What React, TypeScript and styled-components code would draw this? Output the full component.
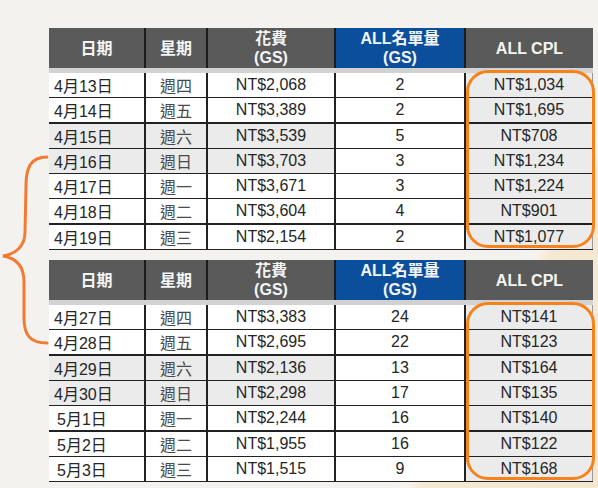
import styled, { createGlobalStyle } from 'styled-components'

type Row = {
  date: string
  day: string
  spend: string
  leads: string
  cpl: string
}

const weekOne: Row[] = [
  { date: '4月13日', day: '週四', spend: 'NT$2,068', leads: '2', cpl: 'NT$1,034' },
  { date: '4月14日', day: '週五', spend: 'NT$3,389', leads: '2', cpl: 'NT$1,695' },
  { date: '4月15日', day: '週六', spend: 'NT$3,539', leads: '5', cpl: 'NT$708' },
  { date: '4月16日', day: '週日', spend: 'NT$3,703', leads: '3', cpl: 'NT$1,234' },
  { date: '4月17日', day: '週一', spend: 'NT$3,671', leads: '3', cpl: 'NT$1,224' },
  { date: '4月18日', day: '週二', spend: 'NT$3,604', leads: '4', cpl: 'NT$901' },
  { date: '4月19日', day: '週三', spend: 'NT$2,154', leads: '2', cpl: 'NT$1,077' },
]

const weekTwo: Row[] = [
  { date: '4月27日', day: '週四', spend: 'NT$3,383', leads: '24', cpl: 'NT$141' },
  { date: '4月28日', day: '週五', spend: 'NT$2,695', leads: '22', cpl: 'NT$123' },
  { date: '4月29日', day: '週六', spend: 'NT$2,136', leads: '13', cpl: 'NT$164' },
  { date: '4月30日', day: '週日', spend: 'NT$2,298', leads: '17', cpl: 'NT$135' },
  { date: '5月1日', day: '週一', spend: 'NT$2,244', leads: '16', cpl: 'NT$140' },
  { date: '5月2日', day: '週二', spend: 'NT$1,955', leads: '16', cpl: 'NT$122' },
  { date: '5月3日', day: '週三', spend: 'NT$1,515', leads: '9', cpl: 'NT$168' },
]

const GlobalStyle = createGlobalStyle`
  html, body {
    margin: 0;
    padding: 0;
  }
  body {
    min-height: 488px;
    background: linear-gradient(119deg, #f3f2ee 0%, #f3f2ee 76.5%, #f8f4ec 78%, #f6e9d4 79.5%, #f5e6cf 100%);
    font-family: 'Liberation Sans', Arial, 'Noto Sans CJK TC', sans-serif;
  }
`

const Page = styled.div`
  position: relative;
  display: flex;
  flex-direction: column;
  gap: 10px;
  padding: 28px 0 0 49px;
`

const Brace = styled.svg`
  position: absolute;
  left: 0;
  top: 0;
  pointer-events: none;
`

const Sheet = styled.div`
  position: relative;
  width: 544px;
`

const columns = '97px 62px 128px 130px 127px'

const HeaderRow = styled.div`
  display: grid;
  grid-template-columns: ${columns};
  height: 40px;
  background: #5a5a5a;
`

const HeadCell = styled.div<{ $blue?: boolean }>`
  display: flex;
  flex-direction: column;
  align-items: center;
  justify-content: center;
  background: ${(p) => (p.$blue ? '#0b4f9c' : 'transparent')};
  border-right: 2px solid #1c1c1c;
  color: #f4f4f4;
  font-weight: 700;
  font-size: 16px;
  line-height: 19px;

  &:last-child {
    border-right: none;
  }
`

const Strip = styled.div`
  height: 5px;
  background: #d2d2d2;
`

const DataRow = styled.div`
  display: grid;
  grid-template-columns: ${columns};
  height: 25.3px;
  box-sizing: border-box;
  border-bottom: 2px solid #222;
`

const Cell = styled.div<{ $left?: boolean; $shade?: boolean; $indent?: boolean }>`
  display: flex;
  align-items: center;
  justify-content: ${(p) => (p.$left ? 'flex-start' : 'center')};
  padding-left: ${(p) => (p.$left ? (p.$indent ? '8px' : '5px') : '0')};
  background: ${(p) => (p.$shade ? '#ebebeb' : '#ffffff')};
  border-right: 2px solid #222;
  color: #262626;
  font-size: 16px;

  &:last-child {
    border-right: 1px solid #9a9a9a;
  }
`

const DayText = styled.span`
  color: #4a4a4a;
`

const Highlight = styled.div`
  position: absolute;
  left: 417px;
  right: -2px;
  top: 42px;
  bottom: 2px;
  border: 3.5px solid #f7821a;
  border-radius: 22px;
  pointer-events: none;
`

const Table = ({ rows }: { rows: Row[] }) => (
  <Sheet>
    <HeaderRow>
      <HeadCell>日期</HeadCell>
      <HeadCell>星期</HeadCell>
      <HeadCell>
        <span>花費</span>
        <span>(GS)</span>
      </HeadCell>
      <HeadCell $blue>
        <span>ALL名單量</span>
        <span>(GS)</span>
      </HeadCell>
      <HeadCell>ALL CPL</HeadCell>
    </HeaderRow>
    <Strip />
    {rows.map((r) => {
      const weekend = r.day === '週六' || r.day === '週日'
      return (
        <DataRow key={r.date}>
          <Cell $left $shade={weekend} $indent={r.date.length < 5}>
            {r.date}
          </Cell>
          <Cell $shade={weekend}>
            <DayText>{r.day}</DayText>
          </Cell>
          <Cell $shade={weekend}>{r.spend}</Cell>
          <Cell>{r.leads}</Cell>
          <Cell $shade>{r.cpl}</Cell>
        </DataRow>
      )
    })}
    <Highlight />
  </Sheet>
)

export default function App() {
  return (
    <>
      <GlobalStyle />
      <Page>
        <Table rows={weekOne} />
        <Table rows={weekTwo} />
        <Brace width="60" height="488" viewBox="0 0 60 488">
          <path
            d="M47,157 C31,157 26,167 26,186 L25,232 C25,246 16,254 3,256 C16,258 24,266 24,282 L24,318 C24,335 30,343 47,343"
            fill="none"
            stroke="#f47a33"
            strokeWidth="3"
            strokeLinecap="round"
          />
        </Brace>
      </Page>
    </>
  )
}
